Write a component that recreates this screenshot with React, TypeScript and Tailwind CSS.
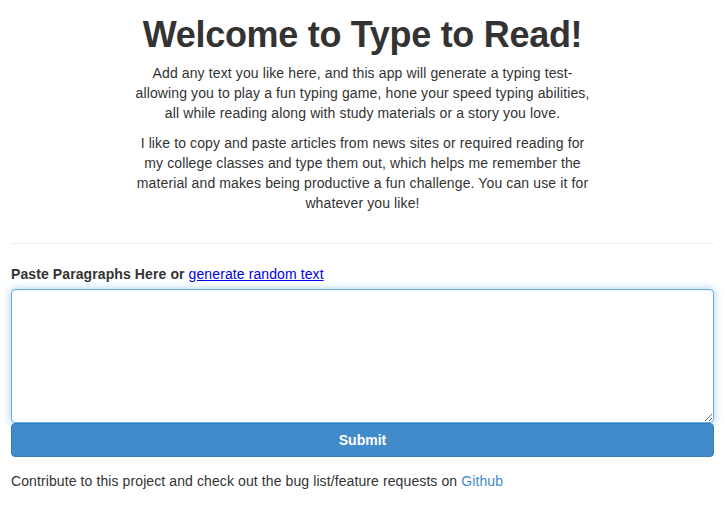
import React, { useState } from "react";

const App = () => {
  const [text, settext] = useState("");

  return (
    <div className="min-h-screen bg-white px-[11px] text-[14px] leading-[20px] text-[#333] font-['Liberation_Sans',Arial,sans-serif]">
      <div className="text-center">
        <h1 className="pt-[13px] text-[36px] leading-[44px] font-bold tracking-[-0.3px] text-[#333]">
          Welcome to Type to Read!
        </h1>
        <div className="mx-auto mt-[6px] tracking-[0.12px]">
          <p>
            Add any text you like here, and this app will generate a typing test-
            <br />
            allowing you to play a fun typing game, hone your speed typing abilities,
            <br />
            all while reading along with study materials or a story you love.
          </p>
          <p className="mt-[10px]">
            I like to copy and paste articles from news sites or required reading for
            <br />
            my college classes and type them out, which helps me remember the
            <br />
            material and makes being productive a fun challenge. You can use it for
            <br />
            whatever you like!
          </p>
        </div>
      </div>

      <hr className="mt-[30px] border-t border-[#eee]" />

      <div className="mt-[20px]">
        <label className="mb-[5px] block font-bold tracking-[0.1px]">
          Paste Paragraphs Here or{" "}
          <a href="#" className="font-normal text-[#0000ee] underline">
            generate random text
          </a>
        </label>
        <textarea
          autoFocus
          value={text}
          onChange={({ target }) => settext(target.value)}
          className="block h-[134px] w-full rounded-[4px] border border-[#66afe9] px-[12px] py-[6px] shadow-[inset_0_1px_1px_rgba(0,0,0,0.075),0_0_8px_rgba(102,175,233,0.6)] outline-none"
        />
        <button className="block h-[34px] w-full rounded-[4px] border border-[#357ebd] bg-[#428bca] font-bold text-white">
          Submit
        </button>
      </div>

      <p className="mt-[14px] tracking-[0.1px]">
        Contribute to this project and check out the bug list/feature requests on{" "}
        <a href="#" className="text-[#428bca]">
          Github
        </a>
      </p>
    </div>
  );
};

export default App;
